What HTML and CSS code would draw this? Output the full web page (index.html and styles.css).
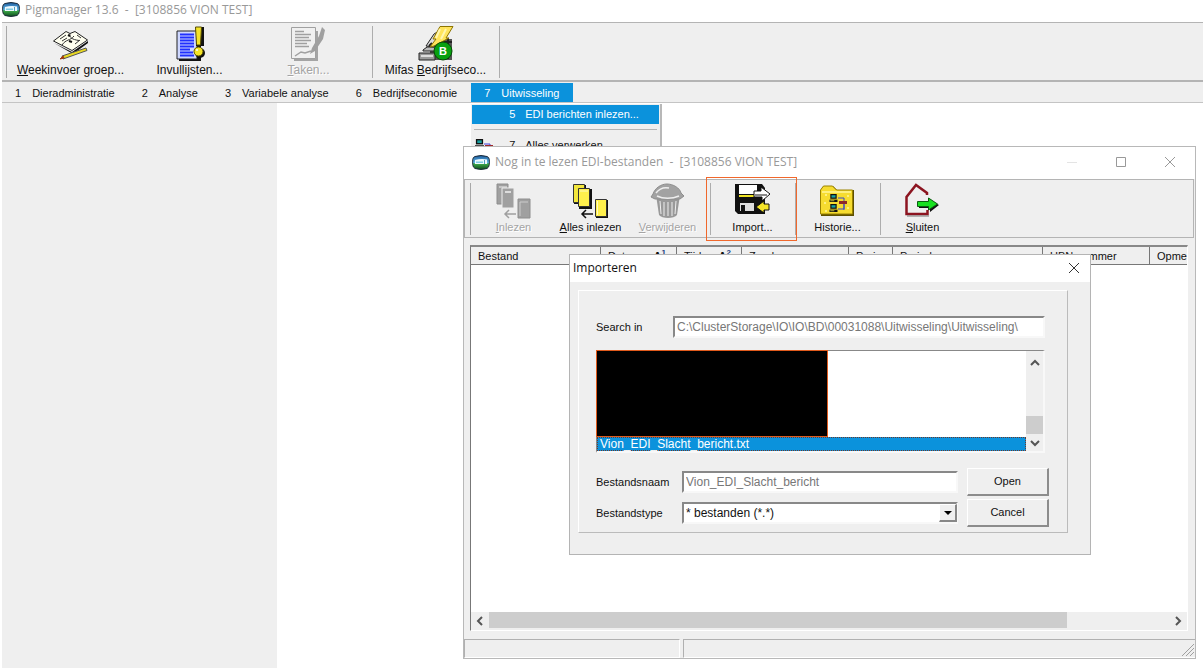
FILE: index.html
```html
<!DOCTYPE html>
<html lang="nl">
<head>
<meta charset="utf-8">
<title>Pigmanager 13.6</title>
<link rel="stylesheet" href="styles.css">
</head>
<body>
<svg width="0" height="0" class="defs" aria-hidden="true">
  <defs>
    <linearGradient id="sky" x1="0" y1="0" x2="0" y2="1"><stop offset="0" stop-color="#1c5a9c"/><stop offset=".5" stop-color="#5fb6e6"/><stop offset=".6" stop-color="#3ca848"/><stop offset="1" stop-color="#0c4a1c"/></linearGradient>
    <symbol id="app" viewBox="0 0 18 15"><path d="M3 1.500Q9-.5 15 1.500q2 .5 2.300 3v5q-.3 3-2.300 4-6 2-12 0-2-1-2.300-4v-5Q1 2 3 1.500z" fill="url(#sky)" stroke="#1b2b3b"/><path d="M3 5q6-1.500 12-.5v4.500H3z" fill="#eef9fd"/><path d="M4 6.500h7V8H4z" fill="#7fcbe4"/><path d="M12.500 5v4" stroke="#4f9fc0"/></symbol>
    <symbol id="pc" viewBox="0 0 10 10"><path d="M1 0h8v6H1z" fill="#111"/><path d="M2.500 1.500h5v3h-5z" fill="#18a0a0"/><path d="M0 7h10v3H0z" fill="#111"/><path d="M1 8h5v1H1z" fill="#e8e040"/></symbol>
  </defs>
</svg>

<div class="main">
  <header class="titlebar">
    <svg class="app-icon"><use href="#app"/></svg>
    <h1 class="title">Pigmanager 13.6 &nbsp;- &nbsp;[3108856 VION TEST]</h1>
  </header>

  <div class="toolbar main-toolbar">
    <span class="grip"></span>
    <button class="tool">
      <svg class="icon" viewBox="0 0 35 35"><path d="M1 17l18 9 16-11v2L20 28z" fill="#111"/><path d="M.500 15L13 5.500l4 2 5-2L34.500 14 19 24.500z" fill="#fffff0" stroke="#222"/><path d="M9 19c4-6 8-4 12-9M17 7.500c-1 4 2 6 9 7M7 13l6-4M9 15l5-3M22 18l5-4M24 9l4 3" fill="none" stroke="#333"/><path d="M15 9l2 1M16 15l3 1" stroke="#111" stroke-width="2"/><path d="M9 30L33 22l1 2.500L10 33z" fill="#e8d820" stroke="#555"/><path d="M7 33l3-3 1 2z" fill="#a03810" stroke="#a03810"/></svg>
      <span><u>W</u>eekinvoer groep...</span>
    </button>
    <button class="tool">
      <svg class="icon" viewBox="0 0 35 35"><path d="M7 7h22v28H7z" fill="#111"/><path d="M5 5h20v28H5z" fill="#cfd8ff" stroke="#222"/><path d="M8 8.500h14M8 11.500h14M8 14.500h14M8 17.500h14M8 20.500h14M8 23.500h10M8 26.500h13M8 29.500h14" stroke="#2030ff" stroke-width="2"/><path d="M24 1h8v19h-8z" fill="#111"/><path d="M23.500 1h6l-1 18h-4z" fill="#f4e428" stroke="#554c00"/><circle cx="28" cy="27" r="5" fill="#111"/><circle cx="26.500" cy="25.500" r="4.500" fill="#f4e428" stroke="#554c00"/><circle cx="25" cy="24" r="1" fill="#fff"/></svg>
      <span>Invullijsten...</span>
    </button>
    <button class="tool" disabled>
      <svg class="icon" viewBox="0 0 35 35"><path d="M3 5h24v30H3z" fill="#a4a4a4"/><path d="M.500 1.500h24v31H.500z" fill="#f0f0f0" stroke="#a0a0a0"/><path d="M4 5.500h9M4 8.500h16M4 11.500h14M4 14.500h16M4 17.500h12M4 20.500h14M4 30l6-4 4 1 6-2" fill="none" stroke="#a0a0a0" stroke-width="1.500"/><path d="M31 1l3 3-2 9-8 12-5 3 2-6L28 10z" fill="#a0a0a0"/></svg>
      <span><u>T</u>aken...</span>
    </button>
    <span class="sep"></span>
    <button class="tool">
      <svg class="icon" viewBox="0 0 35 35"><path d="M12 13h22v21H12z" fill="#555"/><path d="M1 27h16v7H1z" fill="#999" stroke="#222"/><path d="M3 30h12" stroke="#ddd" stroke-width="2"/><path d="M5 24l4-3h9v4H5z" fill="#bbb" stroke="#222"/><path d="M8 20l8-12 5-3-5 16z" fill="#ddd" stroke="#222"/><path d="M11 20l3-3M18 16h16M30 12v21" stroke="#222" stroke-width="2"/><path d="M22 .500h13L28 12h3L16 20l-4 1 6-8h-3z" fill="#ffe45c" stroke="#8c7400"/><path d="M22 3l-4 9M28 3l-5 10" stroke="#fff6b0" stroke-width="2"/><circle cx="25" cy="25" r="9" fill="#08a010" stroke="#064c08"/><text x="25" y="29" text-anchor="middle" class="badge">B</text></svg>
      <span>Mifas <u>B</u>edrijfseco...</span>
    </button>
    <span class="sep"></span>
  </div>

  <nav class="menubar">
    <button class="menu"><span>1</span>Dieradministratie</button>
    <button class="menu"><span>2</span>Analyse</button>
    <button class="menu"><span>3</span>Variabele analyse</button>
    <button class="menu"><span>6</span>Bedrijfseconomie</button>
    <div class="menu-host">
      <button class="menu open"><span>7</span>Uitwisseling</button>
      <div class="dropdown">
        <button class="item active"><i></i><span>5</span>EDI berichten inlezen...</button>
        <hr>
        <button class="item"><i><svg class="net" viewBox="0 0 18 14"><use href="#pc" width="9" height="9"/><path d="M9 5h6v3" fill="none" stroke="#4040e0"/><path d="M10 6h8v6h-8z" fill="#a02828"/><path d="M12 8h4v2h-4z" fill="#fff"/><path d="M2 12h8" stroke="#222"/></svg></i><span>7</span>Alles verwerken...</button>
      </div>
    </div>
  </nav>

  <div class="workspace"><div class="side"></div></div>
</div>

<section class="window">
  <header class="win-title">
    <svg class="app-icon"><use href="#app"/></svg>
    <h2 class="title">Nog in te lezen EDI-bestanden &nbsp;- &nbsp;[3108856 VION TEST]</h2>
    <button class="cap min" aria-label="Minimaliseren"><svg viewBox="0 0 12 12"><path d="M1 6.500h10"/></svg></button>
    <button class="cap" aria-label="Maximaliseren"><svg viewBox="0 0 12 12"><path d="M1.500 1.500h9v9h-9z"/></svg></button>
    <button class="cap" aria-label="Sluiten"><svg viewBox="0 0 12 12"><path d="M1 1l10 10M11 1L1 11"/></svg></button>
  </header>

  <div class="toolbar win-toolbar">
    <span class="grip"></span>
    <button class="tool" disabled>
      <svg class="icon" viewBox="0 0 35 35"><path d="M1 1h11v20H1z" fill="#a0a0a0" stroke="#8e8e8e"/><path d="M3 4h8" stroke="#eee"/><path d="M6 5h12v20H6z" fill="#a0a0a0" stroke="#eee"/><path d="M9 8h6v2H9z" fill="#ddd"/><path d="M22 16h12v19H22z" fill="#a0a0a0" stroke="#8e8e8e"/><path d="M24 19h8M24 19v14" stroke="#ccc"/><path d="M20 31H9M13 27l-4 4 4 4" fill="none" stroke="#a0a0a0" stroke-width="1.500"/></svg>
      <span><u>I</u>nlezen</span>
    </button>
    <button class="tool">
      <svg class="icon" viewBox="0 0 35 35"><path d="M1 2h12v19H1zM6 6h13v20H6zM23 17h12v18H23z" fill="#111"/><path d="M.500 1.500h11v18H.500z" fill="#f2e63c" stroke="#333"/><path d="M5.500 5.500h11v18h-11z" fill="#fff04c" stroke="#333"/><path d="M7 8h8" stroke="#fffbc0"/><path d="M22.500 16.500h11v17h-11z" fill="#fff04c" stroke="#333"/><path d="M24.500 18v14" stroke="#fffbc0"/><path d="M20 31H9M13 27l-4 4 4 4" fill="none" stroke="#111" stroke-width="1.500"/></svg>
      <span><u>A</u>lles inlezen</span>
    </button>
    <button class="tool" disabled>
      <svg class="icon" viewBox="0 0 35 35"><path d="M6 12h24l-3 20c-3 4-15 4-18 0z" fill="#999"/><path d="M3 11C5 5 11 1 17 1s13 4 14 9l3 3-4 3H5l-4-2z" fill="#a2a2a2" stroke="#8d8d8d"/><path d="M6 10c3-4 8-6 13-5M7 13c6 3 15 3 22 0" fill="none" stroke="#eee" stroke-width="1.500"/><path d="M10 18l1 13M14 19v14M18 19v14M22 19v14M26 18l-1 13" stroke="#eee"/></svg>
      <span><u>V</u>erwijderen</span>
    </button>
    <span class="sep"></span>
    <button class="tool marked">
      <svg class="icon" viewBox="0 0 35 35"><path d="M0 1h27l3 4v26H3l-3-3z" fill="#111"/><path d="M4 2h18v9H4z" fill="#fff"/><path d="M4 12h18v2H4z" fill="#f0e428"/><path d="M5 20h14v8H5z" fill="#ddd"/><path d="M6 22h4v6H6z" fill="#111"/><path d="M19 8h7V4l9 7-8 7v-4h-8z" fill="#fff" stroke="#111"/><path d="M20 12h12" stroke="#888" stroke-width="2"/><path d="M34 21h-5v-3l-8 6 8 6v-3h5z" fill="#f4e428" stroke="#111"/></svg>
      <span>Import...</span>
    </button>
    <span class="sep"></span>
    <button class="tool">
      <svg class="icon" viewBox="0 0 35 35"><path d="M1 7l3-4h9l4 4h17v26H1z" fill="#5e5000"/><path d="M.500 7l3-4h9l4 4h16v24H.500z" fill="#f6dc30" stroke="#9a8200"/><path d="M2 9h29M5 12h2m20 1h2M4 20h2m21 5h2M13 9h2M5 28h2" stroke="#fff69a" stroke-width="1.500"/><use href="#pc" x="9" y="11" width="9" height="8"/><use href="#pc" x="9" y="21" width="9" height="8"/><path d="M18 15h6v11h-6M24 18v9" fill="none" stroke="#3848c8"/><path d="M19 18h8v3h-8z" fill="#902828"/></svg>
      <span>Historie...</span>
    </button>
    <span class="sep"></span>
    <button class="tool">
      <svg class="icon" viewBox="0 0 35 35"><path d="M22 12V10L11 2 1.500 14v17h21v-4" fill="none" stroke="#8c1420" stroke-width="2.500"/><path d="M2 33h22" stroke="#777"/><path d="M14 20h11v-3l9 5-9 7v-4H14z" fill="#111"/><path d="M12.500 18.500h11v-3.500l9 6-9 6v-3.500h-11z" fill="#18e020" stroke="#0a5c10"/></svg>
      <span><u>S</u>luiten</span>
    </button>
  </div>

  <div class="grid-box">
    <div class="grid-view">
      <table class="files">
        <colgroup><col class="c130"><col class="c76"><col class="c65"><col class="c107"><col class="c44"><col class="c150"><col class="c107"><col></colgroup>
        <thead><tr><th>Bestand</th><th><div class="sorted">Datum <b>A<sup>1</sup></b></div></th><th><div class="sorted">Tijd <b>A<sup>2</sup></b></div></th><th>Zender</th><th>Perio</th><th>Periode</th><th>UBN nummer</th><th>Opme</th></tr></thead>
      </table>
    </div>
    <div class="hscroll">
      <button class="arrow" aria-label="Naar links"><svg viewBox="0 0 10 10"><path d="M7 1L3 5l4 4"/></svg></button>
      <div class="track"><div class="thumb"></div></div>
      <button class="arrow" aria-label="Naar rechts"><svg viewBox="0 0 10 10"><path d="M3 1l4 4-4 4"/></svg></button>
    </div>
  </div>

  <footer class="status">
    <span class="panel first"></span>
    <span class="panel rest"><svg class="sizer" viewBox="0 0 14 14"><path d="M1 13L13 1M5 13l8-8M9 13l4-4"/></svg></span>
  </footer>
</section>

<section class="dialog" role="dialog" aria-labelledby="dlg">
  <header class="dlg-title">
    <h2 class="title" id="dlg">Importeren</h2>
    <button class="cap" aria-label="Sluiten"><svg viewBox="0 0 12 12"><path d="M1 1l10 10M11 1L1 11"/></svg></button>
  </header>
  <form class="group">
    <div class="search">
      <label for="path">Search in</label>
      <input id="path" class="field" value="C:\ClusterStorage\IO\IO\BD\00031088\Uitwisseling\Uitwisseling\" readonly>
    </div>
    <div class="listbox">
      <div class="rows">
        <div class="blackout"></div>
        <div class="row-selected">Vion_EDI_Slacht_bericht.txt</div>
      </div>
      <div class="vscroll">
        <button type="button" class="arrow" aria-label="Omhoog"><svg viewBox="0 0 10 10"><path d="M1 7l4-4 4 4"/></svg></button>
        <div class="thumb"></div>
        <button type="button" class="arrow" aria-label="Omlaag"><svg viewBox="0 0 10 10"><path d="M1 3l4 4 4-4"/></svg></button>
      </div>
    </div>
    <div class="form-grid">
      <label for="name">Bestandsnaam</label>
      <input id="name" class="field" value="Vion_EDI_Slacht_bericht" readonly>
      <button type="button" class="push">Open</button>
      <label for="type">Bestandstype</label>
      <div class="combo">
        <select id="type" class="field"><option>* bestanden (*.*)</option></select>
        <span class="drop"><svg viewBox="0 0 8 4"><path d="M0 0h8L4 4z"/></svg></span>
      </div>
      <button type="button" class="push">Cancel</button>
    </div>
  </form>
</section>
</body>
</html>
```

FILE: styles.css
```css
* { box-sizing: border-box; }
body {
  margin: 0;
  min-height: 100vh;
  position: relative;
  overflow: hidden;
  background: #fff;
  color: #111;
  font: 11px/15px "Liberation Sans", Arial, sans-serif;
}
button, input, select { font: inherit; color: inherit; margin: 0; }
button { border: 0; padding: 0; background: none; }
.defs { position: absolute; }

/* Main window */
.main {
  min-height: 100vh;
  margin-left: 2px;
  display: flex;
  flex-direction: column;
}
.titlebar {
  display: flex;
  align-items: center;
  gap: 5px;
  height: 22px;
  padding-bottom: 3px;
}
.app-icon { width: 18px; height: 15px; flex: none; }
.title {
  margin: 0;
  flex: 1;
  font: 12px/18px "Open Sans", "Noto Sans", sans-serif;
  color: #999;
  white-space: nowrap;
}
.toolbar {
  display: flex;
  background: #efefef;
  border: 1px solid #b4b4b4;
}
.main-toolbar {
  height: 60px;
  padding: 3px 0 2px 3px;
  border-width: 1px 0 2px;
  font-size: 12px;
}
.grip {
  width: 2px;
  margin-right: 4px;
  border-right: 1px solid #a8a8a8;
}
.tool {
  width: 119px;
  display: flex;
  flex-direction: column;
  align-items: center;
  white-space: nowrap;
}
.tool span { height: 18px; line-height: 19px; }
.tool:disabled { color: #a4a4a4; text-shadow: 1px 1px #fff; }
.icon { width: 35px; height: 35px; flex: none; overflow: visible; }
.badge { font: bold 11px "Liberation Sans", Arial, sans-serif; fill: #fff; }
.sep {
  width: 8px;
  background: linear-gradient(#adadad, #adadad) 4px 0 / 1px 100% no-repeat;
}

.menubar {
  display: flex;
  height: 21px;
  padding-top: 1px;
  background: #efefef;
  border-bottom: 1px solid #c4c4c4;
}
.menu {
  height: 19px;
  padding: 1px 14px 0 13px;
  white-space: nowrap;
}
.menu span { margin-right: 11px; }
.menu-host { position: relative; }
.open, .active { background: #0b92dc; color: #fff; }
.dropdown {
  position: absolute;
  top: 21px;
  left: 0;
  width: 191px;
  height: 60px;
  padding: 1px 1px 0;
  background: #efefef;
  border-right: 2px solid #b8b8b8;
}
.item {
  display: flex;
  align-items: center;
  width: 100%;
  height: 19px;
  text-align: left;
}
.item i { width: 37px; padding-left: 3px; display: flex; }
.item span { width: 16px; }
.net { width: 18px; height: 14px; }
.dropdown hr {
  height: 1px;
  margin: 5px 2px 6px;
  border: 0;
  background: #b4b4b4;
}
.workspace { flex: 1; display: flex; }
.side { width: 275px; background: #efefef; }

/* EDI window */
.window {
  position: absolute;
  left: 463px;
  right: 7px;
  top: 146px;
  bottom: 9px;
  display: flex;
  flex-direction: column;
  background: #efefef;
  border: 1px solid #b8b8b8;
}
.win-title {
  display: flex;
  align-items: center;
  height: 32px;
  padding: 0 1px 2px 8px;
  background: #fff;
}
.win-title .title { margin-left: 5px; }
.cap { width: 49px; height: 31px; display: grid; place-items: center; }
.cap svg { width: 12px; height: 12px; fill: none; stroke: #999; }
.min svg { stroke: #e4e4e4; }
.win-toolbar {
  height: 59px;
  margin-right: 1px;
  padding: 3px 0 2px 4px;
}
.win-toolbar .tool { width: 77px; }
.marked { position: relative; }
.marked::after {
  content: "";
  position: absolute;
  inset: -6px -6px -6px -8px;
  border: 1px solid #f0682c;
}
.grid-box {
  flex: 1;
  display: flex;
  flex-direction: column;
  margin: 7px 7px 8px 6px;
  background: #fff;
  border: 1px solid;
  border-width: 2px 1px 1px;
  border-color: #888 #fff #fff #777;
}
.grid-view { flex: 1; overflow: hidden; }
.files {
  width: 100%;
  table-layout: fixed;
  border-collapse: separate;
  border-spacing: 0;
}
.files th {
  height: 18px;
  padding: 1px 0 1px 7px;
  text-align: left;
  font-weight: normal;
  line-height: 14px;
  white-space: nowrap;
  background: #efefef;
  border-right: 1px solid #777;
  border-bottom: 1px solid #777;
}
.files th:last-child { border-right: 0; overflow: hidden; }
.sorted { display: flex; justify-content: space-between; padding-right: 10px; }
.sorted sup { font-size: 8px; line-height: 0; color: #204080; }
.c130 { width: 130px; }
.c76 { width: 76px; }
.c65 { width: 65px; }
.c107 { width: 107px; }
.c44 { width: 44px; }
.c150 { width: 150px; }
.hscroll { display: flex; height: 18px; background: #efefef; }
.arrow { width: 18px; display: grid; place-items: center; }
.arrow svg { width: 10px; height: 10px; fill: none; stroke: #555; stroke-width: 2; }
.track { flex: 1; height: 16px; }
.hscroll .thumb { width: 85%; height: 16px; background: #cdcdcd; }
.status { display: flex; gap: 3px; height: 19px; }
.panel { border: 1px solid; border-color: #b0b0b0 #fff #fff #b0b0b0; }
.first { width: 216px; }
.rest { flex: 1; display: flex; justify-content: flex-end; align-items: flex-end; border-right: 0; }
.sizer { width: 14px; height: 14px; fill: none; stroke: #a0a0a0; }

/* Import dialog */
.dialog {
  position: absolute;
  left: 569px;
  top: 254px;
  width: 522px;
  background: #efefef;
  border: 1px solid #b4b4b4;
}
.dlg-title {
  display: flex;
  align-items: center;
  height: 27px;
  padding: 0 0 2px 3px;
  background: #fff;
}
.dlg-title .title { color: #111; }
.dlg-title .cap { width: 33px; height: 25px; }
.dlg-title .cap svg { stroke: #333; }
.group {
  margin: 8px 22px 21px 8px;
  padding: 25px 22px 5px 17px;
  border: 1px solid;
  border-color: #fff #bbb #bbb #fff;
}
.search { display: grid; grid-template-columns: 77px 1fr; align-items: center; }
.field {
  width: 100%;
  height: 22px;
  padding: 0 2px;
  border: 2px solid;
  border-color: #888 #f8f8f8 #f8f8f8 #888;
  border-radius: 0;
  outline: 0;
  background: #fff;
  color: #777;
  font-size: 12px;
}
.listbox {
  display: flex;
  height: 103px;
  margin-top: 12px;
  background: #fff;
  border: 1px solid;
  border-width: 1px 2px 2px 1px;
  border-color: #888 #f8f8f8 #f8f8f8 #888;
}
.rows { flex: 1; }
.blackout {
  width: 232px;
  height: 87px;
  margin: -1px 0 0 -1px;
  background: #000;
  border: 1px solid #e05a1c;
}
.row-selected {
  height: 14px;
  padding-left: 2px;
  font-size: 12px;
  line-height: 12px;
  color: #fff;
  background: #0b92dc;
  border: 1px dotted #6a3a30;
}
.vscroll { width: 17px; display: flex; flex-direction: column; background: #efefef; }
.vscroll .arrow { width: 17px; height: 17px; margin-top: 3px; }
.vscroll .arrow:last-child { margin-top: 0; }
.vscroll .thumb { height: 18px; margin-top: auto; background: #cdcdcd; }
.form-grid {
  display: grid;
  grid-template-columns: 77px 276px 82px;
  column-gap: 9px;
  row-gap: 3px;
  align-items: center;
  margin: 15px -4px 0 0;
}
.combo { position: relative; }
.combo .field { appearance: none; display: block; color: #111; }
.drop {
  position: absolute;
  top: 2px;
  right: 1px;
  width: 18px;
  height: 18px;
  display: grid;
  place-items: center;
  pointer-events: none;
  background: #efefef;
  border: 1px solid;
  border-width: 1px 2px 2px 1px;
  border-color: #fff #888 #888 #fff;
}
.drop svg { width: 8px; height: 4px; }
.push {
  height: 28px;
  background: #efefef;
  border: 1px solid;
  border-width: 1px 2px 2px 1px;
  border-color: #fff #8c8c8c #8c8c8c #fff;
}
```
